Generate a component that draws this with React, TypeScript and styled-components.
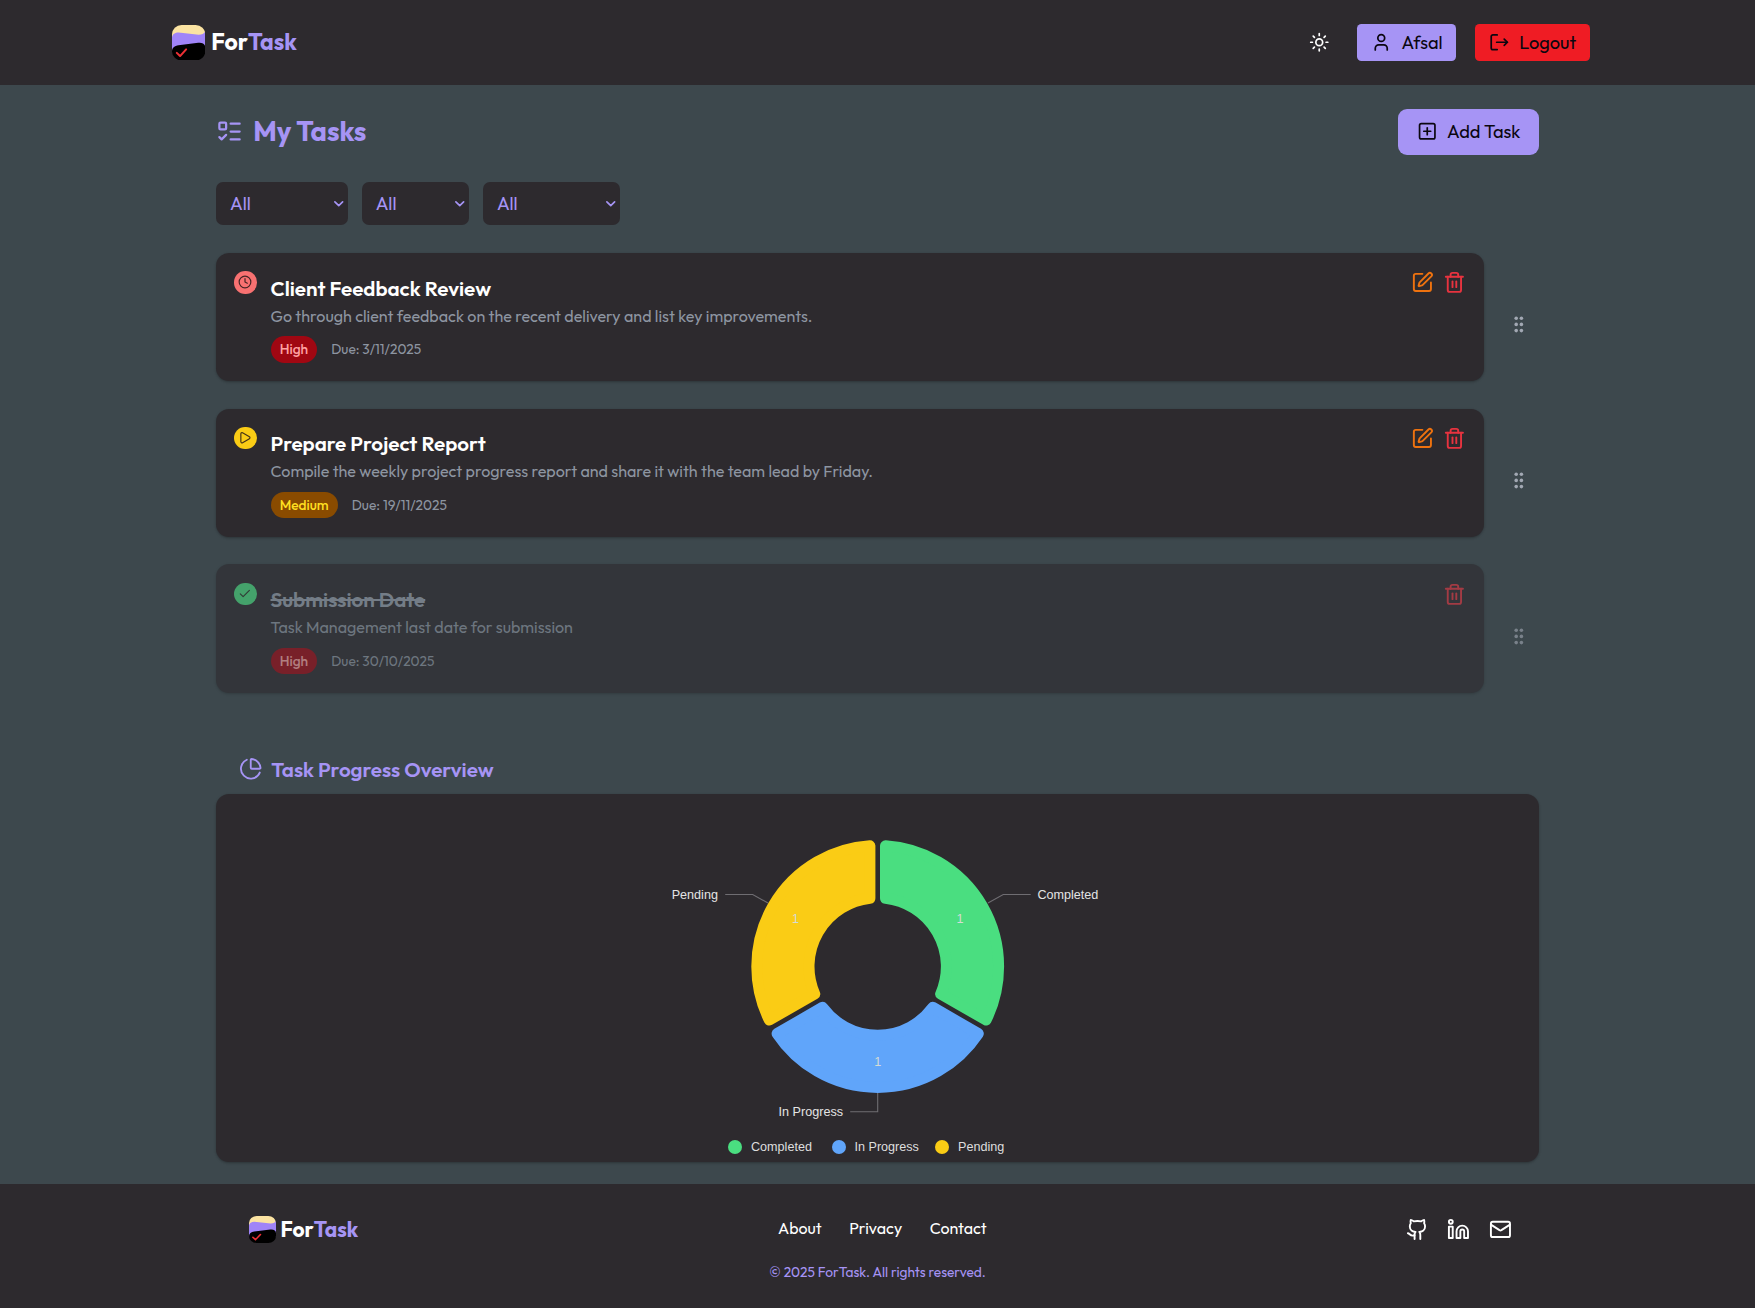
import React from "react";
import styled, { createGlobalStyle } from "styled-components";
import {
  ChartPie,
  Check,
  ChevronDown,
  Clock,
  Github,
  Linkedin,
  ListTodo,
  Mail,
  Play,
  SquarePen,
  SquarePlus,
  Sun,
  Trash2,
  User,
} from "lucide-react";

const c = {
  page: "#3d484d",
  panel: "#2d2a2e",
  accent: "#a694f5",
  muted: "#8d95a1",
  red: "#ef1c24",
};

const GlobalStyle = createGlobalStyle`
  *, *::before, *::after { box-sizing: border-box; }
  body {
    margin: 0;
    background: ${c.page};
    color: #fff;
    font-family: Outfit, Lato, "Open Sans", sans-serif;
    font-size: 16px;
  }
  h1, h2, h3, p, ul { margin: 0; padding: 0; }
  button { font: inherit; border: 0; }
  svg { display: block; flex: none; }
`;

const Page = styled.div`
  min-height: 1308px;
  display: flex;
  flex-direction: column;
`;

const Header = styled.header`
  height: 85px;
  padding: 0 165px 0 171.7px;
  display: flex;
  align-items: center;
  justify-content: space-between;
  background: ${c.panel};
`;

const Brand = styled.div<{ $size: number; $gap: number }>`
  display: flex;
  align-items: center;
  gap: ${(p) => p.$gap}px;
  font-size: ${(p) => p.$size}px;
  font-weight: 700;
  line-height: 1.16;

  em {
    font-style: normal;
    color: ${c.accent};
  }
`;

const HeaderActions = styled.div`
  display: flex;
  align-items: center;
  gap: 18.6px;
`;

const ThemeToggle = styled.button`
  padding: 0;
  margin-right: 8.7px;
  background: none;
  color: #fff;
`;

const HeaderButton = styled.button<{ $tone: string; $width: number }>`
  width: ${(p) => p.$width}px;
  height: 37px;
  padding: 0 0 0 14.2px;
  display: flex;
  align-items: center;
  gap: 9.8px;
  border-radius: 4.5px;
  background: ${(p) => p.$tone};
  color: #0b0710;
  font-size: 18.2px;
  line-height: 20px;
`;

const Main = styled.main`
  flex: 1;
  padding: 23.5px 216px 0;
`;

const TitleRow = styled.div`
  height: 46px;
  display: flex;
  align-items: center;
  justify-content: space-between;
`;

const PageTitle = styled.h1`
  display: flex;
  align-items: center;
  gap: 10.3px;
  color: ${c.accent};
  font-size: 27.44px;
  font-weight: 700;
  line-height: 1;
`;

const AddButton = styled.button`
  width: 141px;
  height: 46px;
  padding: 0 0 0 18.5px;
  display: flex;
  align-items: center;
  gap: 10px;
  border-radius: 9px;
  background: ${c.accent};
  color: #0b0710;
  font-size: 18.25px;
  line-height: 20px;
`;

const Filters = styled.div`
  margin-top: 27.5px;
  display: flex;
  gap: 13.7px;
`;

const Filter = styled.button<{ $width: number }>`
  width: ${(p) => p.$width}px;
  height: 43px;
  padding: 1px 1.5px 0 14px;
  display: flex;
  align-items: center;
  justify-content: space-between;
  border-radius: 7px;
  background: ${c.panel};
  color: ${c.accent};
  font-size: 18.2px;
  line-height: 20px;
`;

const TaskList = styled.ul`
  margin-top: 27.7px;
  display: flex;
  flex-direction: column;
  gap: 27.6px;
  list-style: none;
`;

const TaskRow = styled.li<{ $done: boolean }>`
  display: flex;
  align-items: center;
  opacity: ${(p) => (p.$done ? 0.6 : 1)};
`;

const TaskCard = styled.article`
  width: 1268px;
  height: 128.3px;
  padding: 18.4px 18.2px 0 18px;
  display: flex;
  gap: 14px;
  border-radius: 13px;
  background: ${c.panel};
  box-shadow: 0 1px 3px rgba(0, 0, 0, 0.16), 0 1px 2px rgba(0, 0, 0, 0.12);
`;

const StatusDot = styled.span<{ $color: string }>`
  flex: none;
  width: 22.5px;
  height: 22.5px;
  display: grid;
  place-items: center;
  border-radius: 50%;
  background: ${(p) => p.$color};
  color: rgba(35, 22, 22, 0.85);
`;

const TaskBody = styled.div`
  flex: 1;
`;

const TaskTitle = styled.h3<{ $done: boolean }>`
  margin-top: 1.5px;
  color: ${(p) => (p.$done ? "#99a1af" : "#fff")};
  font-size: 20.6px;
  font-weight: 600;
  line-height: 30px;
  text-decoration: ${(p) => (p.$done ? "line-through" : "none")};
`;

const TaskText = styled.p`
  color: ${c.muted};
  font-size: 16.08px;
  line-height: 26px;
`;

const TaskMeta = styled.div`
  margin-top: 7.5px;
  display: flex;
  align-items: center;
  gap: 13.9px;
`;

const Badge = styled.span<{ $bg: string; $fg: string }>`
  height: 26.5px;
  padding: 0 9.2px;
  display: flex;
  align-items: center;
  border-radius: 13.5px;
  background: ${(p) => p.$bg};
  color: ${(p) => p.$fg};
  font-size: 13.72px;
  font-weight: 500;
  line-height: 18px;
`;

const Due = styled.span`
  color: ${c.muted};
  font-size: 13.72px;
  line-height: 18px;
`;

const TaskActions = styled.div`
  display: flex;
  align-self: flex-start;
  gap: 9.3px;
`;

const ActionButton = styled.button<{ $color: string }>`
  padding: 0;
  background: none;
  color: ${(p) => p.$color};
`;

const DragHandle = styled.div`
  margin: 15px 0 0 29.5px;
`;

const SectionTitle = styled.h2`
  margin-top: 61.9px;
  padding-left: 22.5px;
  height: 29px;
  display: flex;
  align-items: center;
  gap: 9.3px;
  color: ${c.accent};
  font-size: 20.6px;
  font-weight: 600;
  line-height: 22px;
`;

const ChartPanel = styled.section`
  margin-top: 10.8px;
  height: 367.5px;
  display: flex;
  flex-direction: column;
  align-items: center;
  border-radius: 13px;
  background: ${c.panel};
  box-shadow: 0 1px 3px rgba(0, 0, 0, 0.16), 0 1px 2px rgba(0, 0, 0, 0.12);
  font-family: "Liberation Sans", Arial, sans-serif;
`;

const Chart = styled.svg`
  width: 480px;
  height: 336px;
  font-size: 12.6px;
`;

const Legend = styled.div`
  margin: -0.5px 23px 0 0;
  width: 276px;
  display: grid;
  grid-template-columns: 103.5px 103.5px 69px;
`;

const LegendItem = styled.span`
  display: flex;
  align-items: center;
  gap: 9px;
  color: #dedede;
  font-size: 12.6px;
  line-height: 34px;
  white-space: nowrap;
`;

const Swatch = styled.i<{ $color: string }>`
  flex: none;
  width: 14px;
  height: 14px;
  border-radius: 50%;
  background: ${(p) => p.$color};
`;

const Footer = styled.footer`
  height: 123.8px;
  padding: 30.3px 243.3px 0 248.5px;
  background: ${c.panel};
`;

const FooterRow = styled.div`
  height: 29px;
  display: grid;
  grid-template-columns: 1fr auto 1fr;
  align-items: center;
`;

const FooterLinks = styled.nav`
  margin-left: 4.5px;
  display: flex;
  gap: 27.5px;
`;

const FooterLink = styled.a`
  color: #fff;
  font-size: 16px;
  line-height: 1.2;
`;

const Socials = styled.div`
  display: flex;
  justify-content: flex-end;
  gap: 18.7px;
`;

const Copyright = styled.p`
  margin: 20.5px 5px 0 0;
  color: ${c.accent};
  text-align: center;
  font-size: 13.72px;
  line-height: 17px;
`;

function Logo({ width, height }: { width: number; height: number }) {
  return (
    <svg width={width} height={height} viewBox="0 0 66 72" preserveAspectRatio="none">
      <clipPath id="logo-shape">
        <rect x="0" y="0" width="66" height="72" rx="19" />
      </clipPath>
      <g clipPath="url(#logo-shape)">
        <rect width="66" height="44" fill="#fbe3a2" />
        <path d="M0 25C1 18 6 15 13 15L53 20C60 20 65 17 66 12V55H0Z" fill="#a084f8" />
        <path d="M0 54C0 46 5 42 13 41L52 36C60 35 66 38 66 46V72H0Z" fill="#000" />
      </g>
      <path
        d="M9.5 56.5l6.5 6.5 12-13.5"
        fill="none"
        stroke="#ee3035"
        strokeWidth="4"
        strokeLinecap="round"
        strokeLinejoin="round"
      />
    </svg>
  );
}

function LogoutIcon() {
  return (
    <svg
      width="20.5"
      height="20.5"
      viewBox="0 0 24 24"
      fill="none"
      stroke="currentColor"
      strokeWidth="2"
      strokeLinecap="round"
      strokeLinejoin="round"
    >
      <path d="M9.6 3.4H4.6a2 2 0 0 0-2 2v13.2a2 2 0 0 0 2 2h5" />
      <path d="M9 12H21.5" />
      <path d="M17.8 8.3l3.7 3.7-3.7 3.7" />
    </svg>
  );
}

function GripIcon() {
  return (
    <svg width="10" height="17" viewBox="0 0 10 17" fill="#a2a8b3">
      {[2.2, 8.4, 14.6].map((y) => (
        <React.Fragment key={y}>
          <circle cx="2.2" cy={y} r="1.8" />
          <circle cx="7.4" cy={y} r="1.8" />
        </React.Fragment>
      ))}
    </svg>
  );
}

type Task = {
  title: string;
  text: string;
  status: "pending" | "progress" | "done";
  priority: "High" | "Medium";
  due: string;
};

const tasks: Task[] = [
  {
    title: "Client Feedback Review",
    text: "Go through client feedback on the recent delivery and list key improvements.",
    status: "pending",
    priority: "High",
    due: "3/11/2025",
  },
  {
    title: "Prepare Project Report",
    text: "Compile the weekly project progress report and share it with the team lead by Friday.",
    status: "progress",
    priority: "Medium",
    due: "19/11/2025",
  },
  {
    title: "Submission Date",
    text: "Task Management last date for submission",
    status: "done",
    priority: "High",
    due: "30/10/2025",
  },
];

const statusLook = {
  pending: { color: "#f87171", icon: <Clock size={14} strokeWidth={2} /> },
  progress: { color: "#facc15", icon: <Play size={13.7} strokeWidth={2} /> },
  done: { color: "#4ade80", icon: <Check size={13.7} strokeWidth={2} /> },
};

const priorityLook = {
  High: { bg: "#a00712", fg: "#ffa2a2" },
  Medium: { bg: "#894b00", fg: "#ffdf20" },
};

function TaskItem({ task }: { task: Task }) {
  const done = task.status === "done";
  const status = statusLook[task.status];
  const priority = priorityLook[task.priority];
  return (
    <TaskRow $done={done}>
      <TaskCard>
        <StatusDot $color={status.color}>{status.icon}</StatusDot>
        <TaskBody>
          <TaskTitle $done={done}>{task.title}</TaskTitle>
          <TaskText>{task.text}</TaskText>
          <TaskMeta>
            <Badge $bg={priority.bg} $fg={priority.fg}>
              {task.priority}
            </Badge>
            <Due>Due: {task.due}</Due>
          </TaskMeta>
        </TaskBody>
        <TaskActions>
          {!done && (
            <ActionButton $color="#ee720f" aria-label="Edit">
              <SquarePen size={22.8} />
            </ActionButton>
          )}
          <ActionButton $color="#e7333f" aria-label="Delete">
            <Trash2 size={22.8} />
          </ActionButton>
        </TaskActions>
      </TaskCard>
      <DragHandle>
        <GripIcon />
      </DragHandle>
    </TaskRow>
  );
}

const CX = 240;
const CY = 172.5;

/* Point on a slice edge, shifted sideways so that the gap keeps one width along the radius. */
function edgePoint(r: number, degrees: number, shift: number) {
  const a = (degrees * Math.PI) / 180 + Math.asin(shift / r);
  return `${(CX + r * Math.sin(a)).toFixed(2)} ${(CY - r * Math.cos(a)).toFixed(2)}`;
}

function slicePath(from: number, to: number) {
  const corner = 5.5;
  const inset = 2.3 + corner;
  const outer = 126.4 - corner;
  const inner = 63.2 + corner;
  return [
    `M${edgePoint(inner, from, inset)}`,
    `L${edgePoint(outer, from, inset)}`,
    `A${outer} ${outer} 0 0 1 ${edgePoint(outer, to, -inset)}`,
    `L${edgePoint(inner, to, -inset)}`,
    `A${inner} ${inner} 0 0 0 ${edgePoint(inner, from, inset)}Z`,
  ].join("");
}

const slices = [
  { name: "Completed", color: "#4ade80", from: 0, to: 120 },
  { name: "In Progress", color: "#60a5fa", from: 120, to: 240 },
  { name: "Pending", color: "#facc15", from: 240, to: 360 },
];

function ProgressChart() {
  return (
    <Chart viewBox="0.3 0 480 336">
      {slices.map((s) => (
        <path
          key={s.name}
          d={slicePath(s.from, s.to)}
          fill={s.color}
          stroke={s.color}
          strokeWidth="11"
          strokeLinejoin="round"
        />
      ))}
      <g fill="none" stroke="#6f6d72" strokeWidth="1.1">
        <path d="M350.3 109L365.5 100.5H393" />
        <path d="M130.3 109L115 100.5H87.5" />
        <path d="M240 299V317.8H212.5" />
      </g>
      <g fill="#e4e4e4">
        <text x="399.7" y="104.5">Completed</text>
        <text x="80.2" y="104.5" textAnchor="end">Pending</text>
        <text x="205.3" y="322" textAnchor="end">In Progress</text>
      </g>
      <g fill="#d5dbd5" textAnchor="middle">
        <text x="322.3" y="129.3">1</text>
        <text x="157.7" y="129.3">1</text>
        <text x="240" y="271.8">1</text>
      </g>
    </Chart>
  );
}

export default function App() {
  return (
    <>
      <GlobalStyle />
      <Page>
        <Header>
          <Brand $size={23} $gap={6.3}>
            <Logo width={33.3} height={35.5} />
            <span>
              For<em>Task</em>
            </span>
          </Brand>
          <HeaderActions>
            <ThemeToggle aria-label="Toggle theme">
              <Sun size={20.5} />
            </ThemeToggle>
            <HeaderButton $tone={c.accent} $width={99.3}>
              <User size={20.5} />
              Afsal
            </HeaderButton>
            <HeaderButton $tone={c.red} $width={115.2}>
              <LogoutIcon />
              Logout
            </HeaderButton>
          </HeaderActions>
        </Header>

        <Main>
          <TitleRow>
            <PageTitle>
              <ListTodo size={27} />
              My Tasks
            </PageTitle>
            <AddButton>
              <SquarePlus size={20.5} />
              Add Task
            </AddButton>
          </TitleRow>

          <Filters>
            {[132, 107.5, 137].map((width) => (
              <Filter key={width} $width={width}>
                All
                <ChevronDown size={15.5} strokeWidth={2.6} />
              </Filter>
            ))}
          </Filters>

          <TaskList>
            {tasks.map((task) => (
              <TaskItem key={task.title} task={task} />
            ))}
          </TaskList>

          <SectionTitle>
            <ChartPie size={23.5} strokeWidth={1.9} />
            Task Progress Overview
          </SectionTitle>
          <ChartPanel>
            <ProgressChart />
            <Legend>
              {slices.map((s) => (
                <LegendItem key={s.name}>
                  <Swatch $color={s.color} />
                  {s.name}
                </LegendItem>
              ))}
            </Legend>
          </ChartPanel>
        </Main>

        <Footer>
          <FooterRow>
            <Brand $size={20.9} $gap={5}>
              <Logo width={27} height={27} />
              <span>
                For<em>Task</em>
              </span>
            </Brand>
            <FooterLinks>
              <FooterLink>About</FooterLink>
              <FooterLink>Privacy</FooterLink>
              <FooterLink>Contact</FooterLink>
            </FooterLinks>
            <Socials>
              <Github size={22.9} />
              <Linkedin size={22.9} />
              <Mail size={22.9} />
            </Socials>
          </FooterRow>
          <Copyright>© 2025 ForTask. All rights reserved.</Copyright>
        </Footer>
      </Page>
    </>
  );
}
